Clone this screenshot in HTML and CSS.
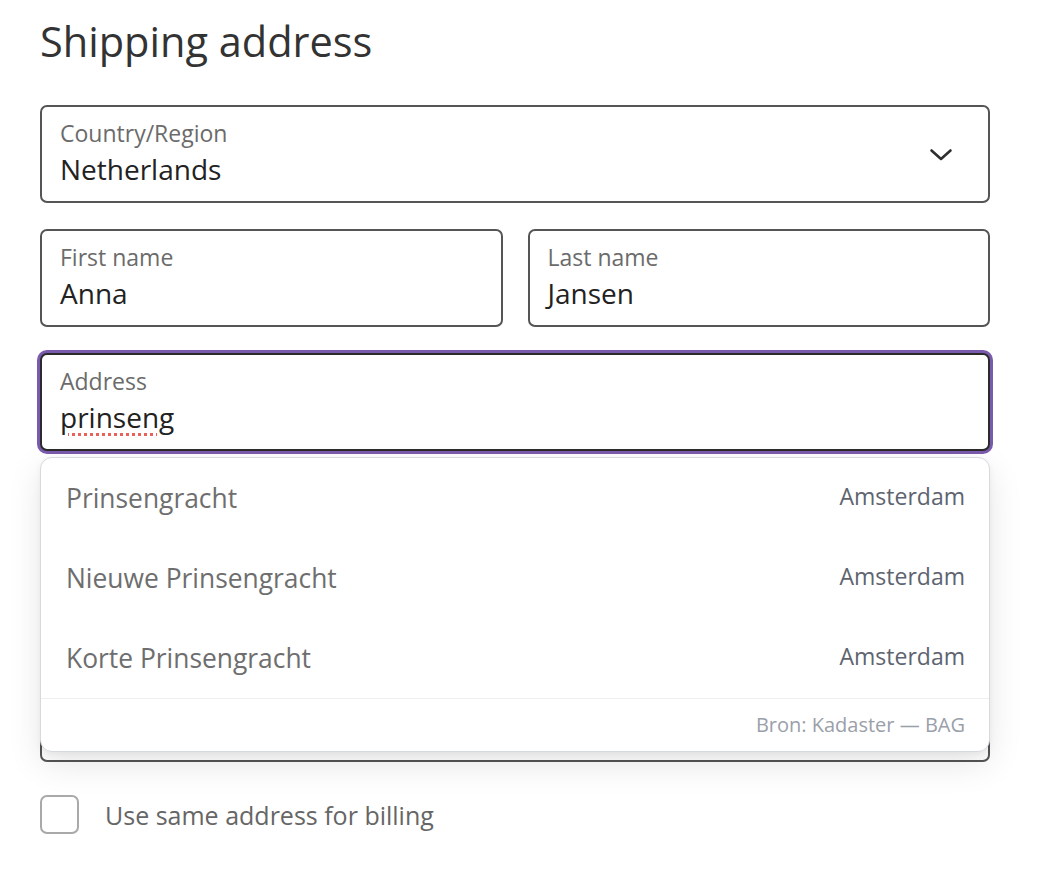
FILE: index.html
```html
<!DOCTYPE html>
<html lang="en">
<head>
<meta charset="utf-8">
<title>Shipping address</title>
<link rel="stylesheet" href="styles.css">
</head>
<body>
<main class="page">
  <h1 class="title">Shipping address</h1>
  <form class="form">
    <div class="field field-select">
      <div class="field-text">
        <span class="label">Country/Region</span>
        <span class="value">Netherlands</span>
      </div>
      <svg class="chevron" width="24" height="14" viewBox="0 0 24 14" aria-hidden="true">
        <path d="M2.5 2.5 L12 11 L21.5 2.5" fill="none" stroke="#2f2f2f" stroke-width="2.6" stroke-linecap="round" stroke-linejoin="round"/>
      </svg>
    </div>
    <div class="row">
      <div class="field">
        <span class="label">First name</span>
        <span class="value">Anna</span>
      </div>
      <div class="field">
        <span class="label">Last name</span>
        <span class="value">Jansen</span>
      </div>
    </div>
    <div class="address-wrap">
      <div class="field field-focus">
        <span class="label">Address</span>
        <span class="value"><span class="misspelled">prinseng</span></span>
      </div>
      <div class="field" aria-hidden="true"></div>
      <div class="field field-tall" aria-hidden="true"></div>
      <div class="suggestions" role="listbox">
        <div class="suggestion"><span class="street">Prinsengracht</span><span class="city">Amsterdam</span></div>
        <div class="suggestion"><span class="street">Nieuwe Prinsengracht</span><span class="city">Amsterdam</span></div>
        <div class="suggestion"><span class="street">Korte Prinsengracht</span><span class="city">Amsterdam</span></div>
        <div class="source">Bron: Kadaster — BAG</div>
      </div>
    </div>
    <label class="check">
      <span class="box"></span>
      <span class="check-label">Use same address for billing</span>
    </label>
  </form>
</main>
</body>
</html>
```
FILE: styles.css
```css
* { box-sizing: border-box; }

body {
  margin: 0;
  background: #ffffff;
  font-family: "Open Sans", "Noto Sans", sans-serif;
  color: #222;
}

.page {
  padding: 17px 48px 0 40px;
}

.title {
  margin: 0;
  font-size: 41.5px;
  line-height: 49px;
  font-weight: 400;
  color: #333333;
}

.form {
  margin-top: 39px;
  display: flex;
  flex-direction: column;
}

.field {
  height: 98px;
  border: 2px solid #555555;
  border-radius: 7px;
  padding: 12px 18px 13px;
  display: flex;
  flex-direction: column;
  background: #fff;
}

.label {
  font-size: 23px;
  line-height: 28px;
  color: #6b6b6b;
  white-space: nowrap;
}

.value {
  margin-top: 5px;
  font-size: 28px;
  line-height: 34px;
  color: #222222;
  min-height: 34px;
}

.field-select {
  flex-direction: row;
  align-items: center;
  padding-right: 35px;
}

.field-text {
  flex: 1;
  display: flex;
  flex-direction: column;
  align-self: stretch;
}

.chevron {
  flex: none;
  margin-top: 2px;
}

.row {
  margin-top: 26px;
  display: grid;
  grid-template-columns: 1fr 1fr;
  gap: 25px;
}

.address-wrap {
  position: relative;
  margin-top: 26px;
  display: flex;
  flex-direction: column;
  gap: 26px;
}

.field-focus {
  border-color: #2b2b2b;
  box-shadow: 0 0 0 3px #7a5aac;
}

.field-tall {
  height: 161px;
}

.misspelled {
  text-decoration: underline dotted #e8615b;
  text-decoration-thickness: 2.5px;
  text-underline-offset: 5px;
}

.suggestions {
  position: absolute;
  top: 104px;
  left: 0;
  right: 0;
  height: 295px;
  background: #ffffff;
  border: 1.5px solid #d6d9de;
  border-radius: 12px;
  box-shadow: 0 12px 34px rgba(0, 0, 0, 0.10), 0 2px 6px rgba(0, 0, 0, 0.05);
  display: flex;
  flex-direction: column;
  overflow: hidden;
}

.suggestion {
  height: 80px;
  flex: none;
  display: flex;
  align-items: center;
  justify-content: space-between;
  padding: 0 24px 0 25px;
}

.street {
  font-size: 26.4px;
  color: #6e6e6e;
}

.city {
  font-size: 23px;
  color: #5d6470;
  padding-bottom: 5px;
}

.source {
  flex: 1;
  border-top: 1.5px solid #efefef;
  display: flex;
  align-items: center;
  justify-content: flex-end;
  padding: 0 24px 2px;
  font-size: 20px;
  color: #9aa0aa;
}

.check {
  margin-top: 33px;
  display: flex;
  align-items: center;
  gap: 26px;
}

.box {
  width: 39px;
  height: 39px;
  border: 2px solid #a9a9a9;
  border-radius: 7px;
  flex: none;
}

.check-label {
  font-size: 25px;
  color: #666666;
}
```
